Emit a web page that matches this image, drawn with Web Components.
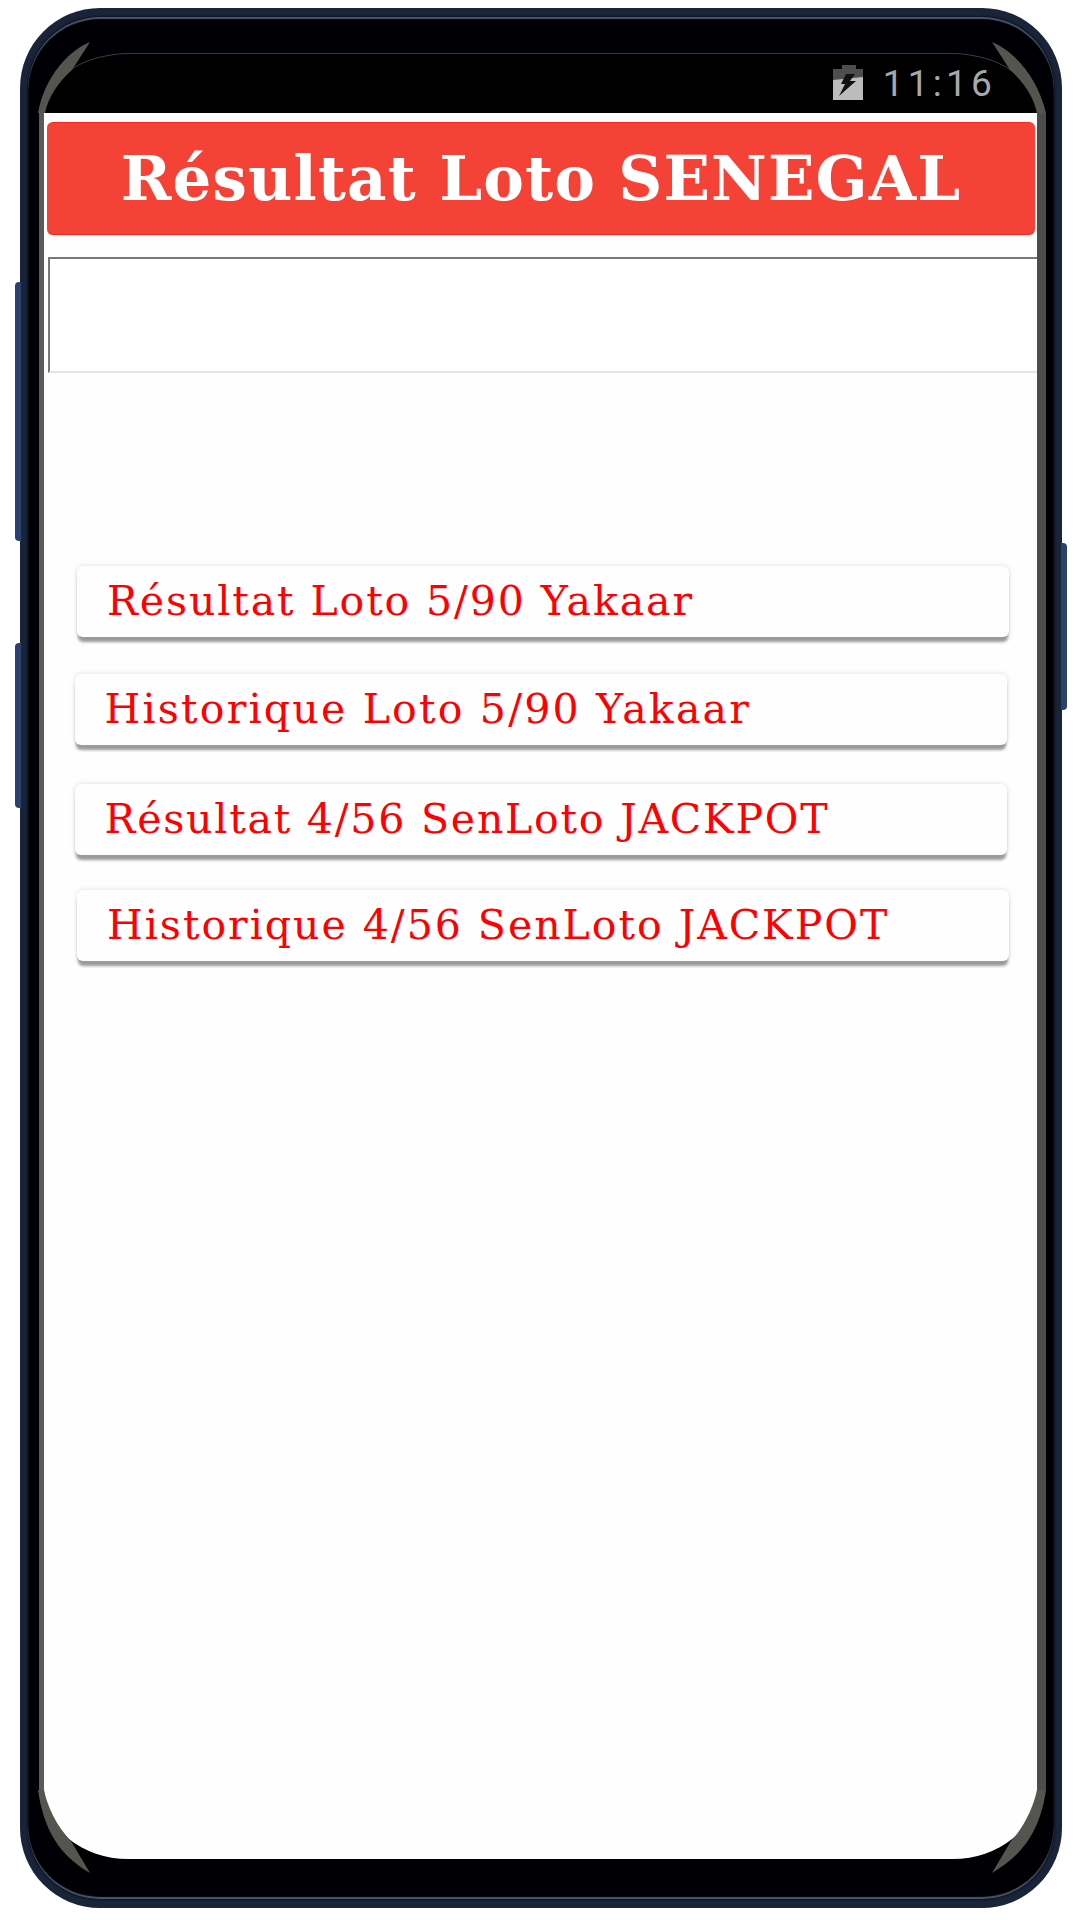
<!DOCTYPE html>
<html>
<head>
<meta charset="utf-8">
<style>
    html, body { margin: 0; padding: 0; background: #ffffff; }
    body { width: 1080px; height: 1920px; overflow: hidden; }
</style>
</head>
<body>
    <template id="js-phone-frame">
        <style>
            :host { display: block; position: relative; width: 1042px; height: 1900px; margin: 8px 0 0 20px; }
            .body {
                box-sizing: border-box; height: 100%; padding: 9px 8px;
                background: #1a2438; border-radius: 80px;
            }
            .bezel {
                box-sizing: border-box; height: 100%;
                padding: 36px 17px 40px 16px;
                background: #000004; border-radius: 72px;
                box-shadow: inset 0 2px 1px #4a5570, inset 0 -2px 1px #4a5570, 0 0 3px #000;
            }
            .screen {
                display: flex; flex-direction: column; height: 100%;
                background: #000; overflow: hidden;
                border-radius: 85px 85px 84px 84px / 60px 60px 69px 69px;
                box-shadow: inset 0 1px 0 #3c3c3c;
            }
            .key { position: absolute; width: 6px; background: #2a4170; }
            .key.a { left: -5px; top: 274px; height: 259px; border-radius: 4px 0 0 4px; }
            .key.b { left: -5px; top: 635px; height: 165px; border-radius: 4px 0 0 4px; }
            .key.c { right: -5px; top: 535px; height: 167px; border-radius: 0 4px 4px 0; }
            svg.shine { position: absolute; left: 0; top: 0; pointer-events: none; }
        </style>
        <div class="key a"></div>
        <div class="key b"></div>
        <div class="key c"></div>
        <div class="body">
            <div class="bezel">
                <div class="screen"><slot></slot></div>
            </div>
        </div>
        <!-- grey strips and corner wedges, in page coords -->
        <svg class="shine" width="1042" height="1900" viewBox="20 8 1042 1900" fill="#55554f">
            <rect x="39" y="113" width="5" height="1677" fill="#5a5a58"/>
            <rect x="1037" y="113" width="9" height="1677" fill="#4c4c4a"/>
            <path d="M90 42C70 50 45 75 38 113L45 113C48 98 58 82 72 70Z"/>
            <path d="M992 42C1012 50 1037 75 1046 113L1037 113C1034 98 1024 82 1010 70Z"/>
            <path d="M90 1873C68 1860 45 1840 38 1790L44 1790C47 1805 56 1826 71 1841Z"/>
            <path d="M992 1873C1014 1860 1039 1840 1046 1790L1037 1790C1034 1805 1025 1826 1011 1841Z"/>
        </svg>
    </template>

    <template id="js-status-bar">
        <style>
            :host {
                display: flex; flex: none; align-items: center; justify-content: flex-end; gap: 20px;
                height: 60px; padding-right: 41px; box-sizing: border-box;
                color: #a8a8a8;
                font: 37px Roboto, sans-serif; letter-spacing: 4.2px;
            }
            svg { display: block; margin-top: -1px; }
            span { margin-top: 1px; }
        </style>
        <svg width="30" height="35" viewBox="0 0 30 35">
            <path fill="#4e4e4e" d="M9 0h14v4h7v12H0V4h9z"/>
            <path fill="#bcbcbc" d="M0 15L30 12V35H0z"/>
            <path fill="#111" d="M13 9H22L17 16H23L6 31L12 19H8z"/>
        </svg>
        <span>11:16</span>
    </template>

    <template id="js-app-view">
        <style>
            :host {
                display: flex; flex-direction: column; flex: 1;
                background: #fefefe; padding-top: 9px; min-height: 0;
            }
            header {
                display: flex; align-items: center; justify-content: center;
                height: 113px; margin: 0 2px 0 3px;
                background: #f44336; border-top: 1px solid #f5281c; border-bottom: 1px solid #f5281c;
                border-radius: 6px; box-sizing: border-box;
                color: #fff; font: bold 61px "DejaVu Serif", serif; letter-spacing: 1.1px;
            }
            .field {
                height: 116px; margin: 22px 0 0 4px; box-sizing: border-box;
                background: #fff;
                border-top: 2px solid #777; border-left: 2px solid #777; border-bottom: 2px solid #e4e4e4;
            }
            .list { display: flex; flex-direction: column; padding-top: 193px; }
        </style>
        <header><slot name="title"></slot></header>
        <div class="field"></div>
        <div class="list"><slot></slot></div>
    </template>

    <template id="js-menu-button">
        <style>
            :host {
                display: flex; align-items: center; box-sizing: border-box;
                width: 932px; height: 71px; padding: 0 0 2px 30px;
                background: #fefefe; border-radius: 6px; color: #ff0000;
                font: 41px "DejaVu Serif", serif; letter-spacing: var(--track, 2px);
                box-shadow: 0 6px 3px -1px #9a9a9a, 0 0 5px #ddd;
            }
        </style>
        <slot></slot>
    </template>

    <phone-frame>
        <status-bar></status-bar>
        <app-view>
            <span slot="title">Résultat Loto SENEGAL</span>
            <menu-button style="margin-left:33px; --track:1.92px">Résultat Loto 5/90 Yakaar</menu-button>
            <menu-button style="margin:37px 0 0 30.5px; --track:2.22px">Historique Loto 5/90 Yakaar</menu-button>
            <menu-button style="margin:39px 0 0 30.5px; --track:1.8px">Résultat 4/56 SenLoto JACKPOT</menu-button>
            <menu-button style="margin:35px 0 0 33px">Historique 4/56 SenLoto JACKPOT</menu-button>
        </app-view>
    </phone-frame>

    <script>
        function define(name, templateId) {
            customElements.define(name, class extends HTMLElement {
                constructor() {
                    super();
                    const content = document.getElementById(templateId).content;
                    this.attachShadow({ mode: 'open' }).appendChild(content.cloneNode(true));
                }
            });
        }
        define('phone-frame', 'js-phone-frame');
        define('status-bar', 'js-status-bar');
        define('app-view', 'js-app-view');
        define('menu-button', 'js-menu-button');
    </script>
</body>
</html>
